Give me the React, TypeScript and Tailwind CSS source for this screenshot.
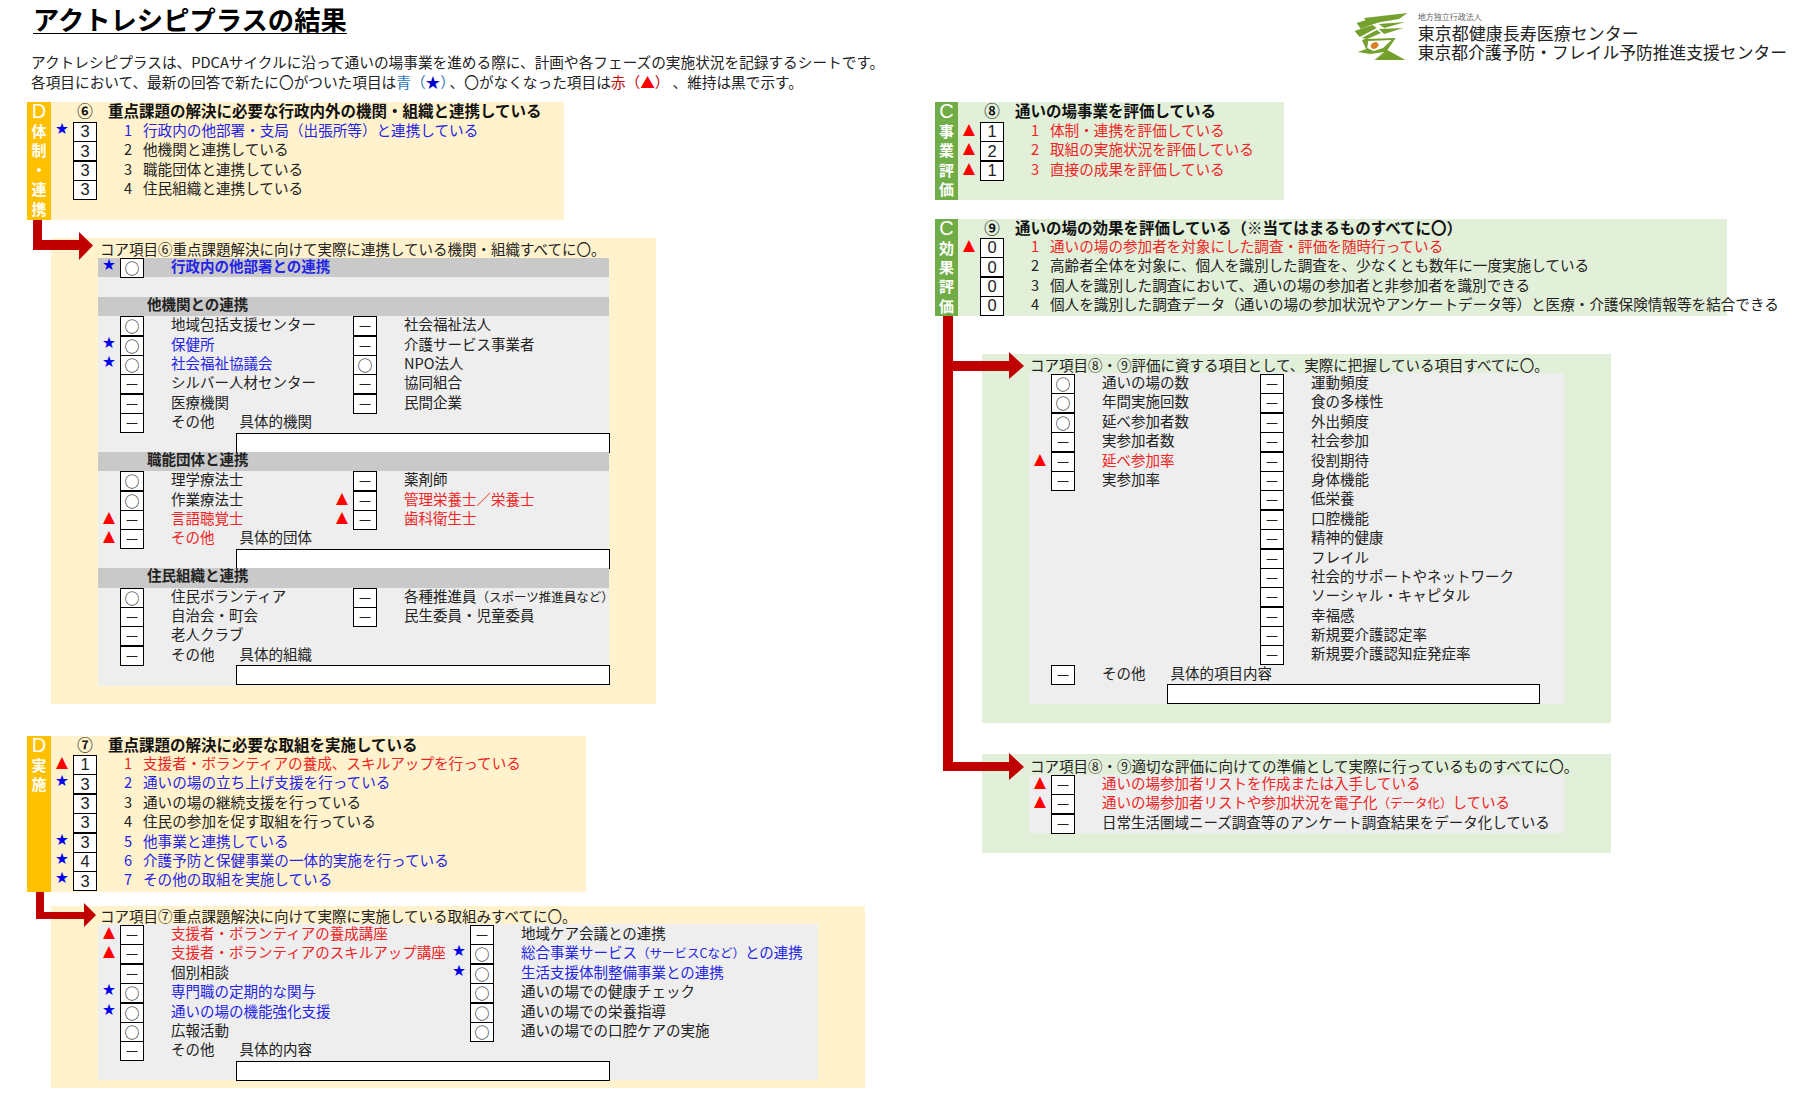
import React from "react";

const jp = "font-['Noto_Sans_CJK_JP',sans-serif]";

type Tone = "blue" | "red" | "black";

const toneClass: Record<Tone, string> = {
  blue: "text-[#2424e8]",
  red: "text-[#f02424]",
  black: "text-[#222222]",
};

function Mark({ tone }: { tone: Tone }) {
  return (
    <span className="flex w-[22px] shrink-0 justify-center font-['DejaVu_Sans',sans-serif] text-[15.5px] leading-[15px]">
      {tone === "blue" && <span className="text-[#0000ee]">★</span>}
      {tone === "red" && <span className="text-[#ff0000]">▲</span>}
    </span>
  );
}

function Box({ value }: { value: string }) {
  const digit = /[0-9]/.test(value);
  return (
    <span
      className={`flex h-[20px] w-[24px] shrink-0 items-center justify-center border border-black bg-white pb-[1px] leading-none text-[#222222] ${digit ? "font-['Liberation_Sans',sans-serif] text-[16.5px]" : "text-[15px]"}`}
    >
      {value}
    </span>
  );
}

// 設問の1行（★▲ + 回答欄 + 番号 + 文）
function Question({ no, text, value, tone = "black" }: { no: number; text: string; value: string; tone?: Tone }) {
  return (
    <div className="flex h-[19.4px] items-start whitespace-nowrap">
      <Mark tone={tone} />
      <Box value={value} />
      <span className={`ml-[27px] w-[19px] shrink-0 text-[14.6px] leading-[15px] ${toneClass[tone]}`}>{no}</span>
      <span className={`text-[14.6px] leading-[15px] ${toneClass[tone]}`}>{text}</span>
    </div>
  );
}

function Item({ label, value, tone = "black", note }: { label: React.ReactNode; value: string; tone?: Tone; note?: string }) {
  return (
    <div className="flex h-[19.4px] items-start whitespace-nowrap">
      <Mark tone={tone} />
      <Box value={value} />
      <span className={`ml-[27px] text-[14.5px] leading-[15px] ${toneClass[tone]}`}>{label}</span>
      {note && <span className="ml-[25px] text-[14.5px] leading-[15px] text-[#222222]">{note}</span>}
    </div>
  );
}

type Entry = { label: React.ReactNode; value: string; tone?: Tone; note?: string };

function Items({ entries, className }: { entries: Entry[]; className?: string }) {
  return (
    <div className={className}>
      {entries.map((e, i) => (
        <Item key={i} {...e} />
      ))}
    </div>
  );
}

function InputRow() {
  return (
    <div className="h-[19.4px] pl-[138px]">
      <div className="h-[20px] w-[374px] border border-black bg-white" />
    </div>
  );
}

function GroupBar({ children }: { children: React.ReactNode }) {
  return <div className="h-[19.4px] bg-[#c9c9c9] pl-[49px] text-[14.5px] font-bold leading-[14px] text-[#222222]">{children}</div>;
}

function SideBar({ letter, chars, className }: { letter: string; chars: string[]; className: string }) {
  return (
    <div className={`flex shrink-0 flex-col items-center text-white ${className}`}>
      <span className="h-[20px] font-['Liberation_Sans',sans-serif] text-[20px] leading-[18px]">{letter}</span>
      {chars.map((c, i) => (
        <span key={i} className="h-[19.4px] text-[15px] font-bold leading-[17px]">
          {c}
        </span>
      ))}
    </div>
  );
}

function PanelHead({ mark, text, short }: { mark: string; text: string; short?: boolean }) {
  return (
    <div className={`flex items-start whitespace-nowrap text-[15.5px] font-bold leading-[16px] text-[#111111] ${short ? "h-[19px]" : "h-[20px]"}`}>
      <span className="ml-[22px] w-[24px] shrink-0 text-center">{mark}</span>
      <span className="ml-[11px]">{text}</span>
    </div>
  );
}

function Logo() {
  return (
    <svg viewBox="0 0 70 58" className="h-[58px] w-[70px] shrink-0">
      <g transform="translate(-4 0) scale(1.06 1)">
        <g fill="#74a02e">
          <path d="M17 10 L58 5 L50 11 L33 14 L22 17 Z" />
          <path d="M10 15 L22 11 L28 15 L14 21 Z" />
          <path d="M8 23 L25 17 L29 20 L13 29 Z" />
          <path d="M15 30 L29 22 L33 25 L20 31 Z" />
          <path d="M31 16 L56 14 L36 20 Z" />
          <path d="M31 21 L54 20 L36 26 Z" />
          <path d="M15 32 L18 31 L47 30 L39 42 L56 52 L27 52 L36 44 L23 46 L11 44 L19 41 Z" />
        </g>
        <path d="M20 40 L21 33 L43 32 L35 40 L26 43 Z" fill="#ffffff" />
        <ellipse cx="27" cy="37.5" rx="3.8" ry="3" fill="#d8812a" transform="rotate(-35 27 37.5)" />
      </g>
    </svg>
  );
}

const core6a: Entry[] = [
  { label: "地域包括支援センター", value: "○" },
  { label: "保健所", value: "○", tone: "blue" },
  { label: "社会福祉協議会", value: "○", tone: "blue" },
  { label: "シルバー人材センター", value: "－" },
  { label: "医療機関", value: "－" },
  { label: "その他", value: "－", note: "具体的機関" },
];
const core6b: Entry[] = [
  { label: "社会福祉法人", value: "－" },
  { label: "介護サービス事業者", value: "－" },
  { label: "NPO法人", value: "○" },
  { label: "協同組合", value: "－" },
  { label: "民間企業", value: "－" },
];
const core6c: Entry[] = [
  { label: "理学療法士", value: "○" },
  { label: "作業療法士", value: "○" },
  { label: "言語聴覚士", value: "－", tone: "red" },
  { label: "その他", value: "－", tone: "red", note: "具体的団体" },
];
const core6d: Entry[] = [
  { label: "薬剤師", value: "－" },
  { label: "管理栄養士／栄養士", value: "－", tone: "red" },
  { label: "歯科衛生士", value: "－", tone: "red" },
];
const core6e: Entry[] = [
  { label: "住民ボランティア", value: "○" },
  { label: "自治会・町会", value: "－" },
  { label: "老人クラブ", value: "－" },
  { label: "その他", value: "－", note: "具体的組織" },
];
const core6f: Entry[] = [
  {
    label: (
      <>
        各種推進員<span className="text-[12.5px]">（スポーツ推進員など）</span>
      </>
    ),
    value: "－",
  },
  { label: "民生委員・児童委員", value: "－" },
];

const core7a: Entry[] = [
  { label: "支援者・ボランティアの養成講座", value: "－", tone: "red" },
  { label: "支援者・ボランティアのスキルアップ講座", value: "－", tone: "red" },
  { label: "個別相談", value: "－" },
  { label: "専門職の定期的な関与", value: "○", tone: "blue" },
  { label: "通いの場の機能強化支援", value: "○", tone: "blue" },
  { label: "広報活動", value: "○" },
  { label: "その他", value: "－", note: "具体的内容" },
];
const core7b: Entry[] = [
  { label: "地域ケア会議との連携", value: "－" },
  {
    label: (
      <>
        総合事業サービス<span className="text-[12.5px]">（サービスCなど）</span>との連携
      </>
    ),
    value: "○",
    tone: "blue",
  },
  { label: "生活支援体制整備事業との連携", value: "○", tone: "blue" },
  { label: "通いの場での健康チェック", value: "○" },
  { label: "通いの場での栄養指導", value: "○" },
  { label: "通いの場での口腔ケアの実施", value: "○" },
];

const core8a: Entry[] = [
  { label: "通いの場の数", value: "○" },
  { label: "年間実施回数", value: "○" },
  { label: "延べ参加者数", value: "○" },
  { label: "実参加者数", value: "－" },
  { label: "延べ参加率", value: "－", tone: "red" },
  { label: "実参加率", value: "－" },
];
const core8b: Entry[] = [
  "運動頻度",
  "食の多様性",
  "外出頻度",
  "社会参加",
  "役割期待",
  "身体機能",
  "低栄養",
  "口腔機能",
  "精神的健康",
  "フレイル",
  "社会的サポートやネットワーク",
  "ソーシャル・キャピタル",
  "幸福感",
  "新規要介護認定率",
  "新規要介護認知症発症率",
].map((label) => ({ label, value: "－" }));

export default function App() {
  return (
    <div className={`relative h-[1098px] w-[1800px] overflow-hidden bg-white text-[#222222] ${jp}`}>
      {/* ヘッダー */}
      <header className="flex h-[102px] justify-between">
        <div className="pl-[31px] pt-[4px]">
          <h1 className="ml-[2px] w-fit border-b border-black text-[26.3px] font-bold leading-[29px] text-black">アクトレシピプラスの結果</h1>
          <p className="mt-[18px] text-[14.66px] leading-[20px]">
            アクトレシピプラスは、PDCAサイクルに沿って通いの場事業を進める際に、計画や各フェーズの実施状況を記録するシートです。
            <br />
            各項目において、最新の回答で新たに〇がついた項目は<span className="text-[#2e75b6]">青（<span className="text-[#0000cc]">★</span>）</span>
            <span className="ml-[2px]">、〇がなくなった項目は</span>
            <span className="text-[#c00000]">赤（<span className="text-[#ff0000]">▲</span>）</span>
            <span className="inline-block w-[3px]" />、維持は黒で示す。
          </p>
        </div>
        <div className="flex items-start pr-[13px] pt-[8px]">
          <Logo />
          <div className="ml-[-2px] whitespace-nowrap text-[#222222]">
            <div className="pt-[3px] text-[8px] leading-[12px] text-[#666666]">地方独立行政法人</div>
            <div className="text-[17px] leading-[19px]">東京都健康長寿医療センター</div>
            <div className="text-[16.8px] leading-[20px]">東京都介護予防・フレイル予防推進支援センター</div>
          </div>
        </div>
      </header>

      <main className="flex">
        {/* 左カラム */}
        <section className="w-[935px] shrink-0 pl-[27px]">
          <div className="flex h-[118px] w-[537px] bg-[#fff2cc]">
            <SideBar letter="D" chars={["体", "制", "・", "連", "携"]} className="w-[24px] bg-[#ffc000]" />
            <div className="min-w-0 flex-1">
              <PanelHead mark="⑥" text="重点課題の解決に必要な行政内外の機関・組織と連携している" />
              <Question no={1} value="3" tone="blue" text="行政内の他部署・支局（出張所等）と連携している" />
              <Question no={2} value="3" text="他機関と連携している" />
              <Question no={3} value="3" text="職能団体と連携している" />
              <Question no={4} value="3" text="住民組織と連携している" />
            </div>
          </div>

          <div className="ml-[24px] mt-[18px] h-[466px] w-[605px] bg-[#fff2cc]">
            <div className="h-[20px] whitespace-nowrap pl-[49px] text-[14.5px] leading-[22px] text-[#222222]">コア項目⑥重点課題解決に向けて実際に連携している機関・組織すべてに〇。</div>
            <div className="ml-[47px] w-[511px] bg-[#eeeeee] pb-[1px]">
              <div className="flex h-[19.4px] items-start bg-[#c9c9c9]">
                <Mark tone="blue" />
                <Box value="○" />
                <span className="ml-[27px] text-[14.5px] font-bold leading-[15px] text-[#2424e8]">行政内の他部署との連携</span>
              </div>
              <div className="h-[19.4px]" />
              <GroupBar>他機関との連携</GroupBar>
              <div className="flex">
                <Items entries={core6a} className="w-[233px] shrink-0" />
                <Items entries={core6b} />
              </div>
              <InputRow />
              <GroupBar>職能団体と連携</GroupBar>
              <div className="flex">
                <Items entries={core6c} className="w-[233px] shrink-0" />
                <Items entries={core6d} />
              </div>
              <InputRow />
              <GroupBar>住民組織と連携</GroupBar>
              <div className="flex">
                <Items entries={core6e} className="w-[233px] shrink-0" />
                <Items entries={core6f} />
              </div>
              <InputRow />
            </div>
          </div>

          <div className="mt-[32px] flex h-[156px] w-[559px] bg-[#fff2cc]">
            <SideBar letter="D" chars={["実", "施"]} className="w-[24px] bg-[#ffc000]" />
            <div className="min-w-0 flex-1">
              <PanelHead short mark="⑦" text="重点課題の解決に必要な取組を実施している" />
              <Question no={1} value="1" tone="red" text="支援者・ボランティアの養成、スキルアップを行っている" />
              <Question no={2} value="3" tone="blue" text="通いの場の立ち上げ支援を行っている" />
              <Question no={3} value="3" text="通いの場の継続支援を行っている" />
              <Question no={4} value="3" text="住民の参加を促す取組を行っている" />
              <Question no={5} value="3" tone="blue" text="他事業と連携している" />
              <Question no={6} value="4" tone="blue" text="介護予防と保健事業の一体的実施を行っている" />
              <Question no={7} value="3" tone="blue" text="その他の取組を実施している" />
            </div>
          </div>

          <div className="ml-[24px] mt-[14px] h-[182px] w-[814px] bg-[#fff2cc]">
            <div className="h-[18px] whitespace-nowrap pl-[49px] text-[14.5px] leading-[20px] text-[#222222]">コア項目⑦重点課題解決に向けて実際に実施している取組みすべてに〇。</div>
            <div className="ml-[47px] w-[720px] bg-[#eeeeee] pt-[1px]">
              <div className="flex">
                <Items entries={core7a} className="w-[350px] shrink-0" />
                <Items entries={core7b} />
              </div>
              <InputRow />
            </div>
          </div>
        </section>

        {/* 右カラム */}
        <section className="flex-1">
          <div className="flex h-[98px] w-[349px] bg-[#e2efd9]">
            <SideBar letter="C" chars={["事", "業", "評", "価"]} className="w-[23px] bg-[#70ad47]" />
            <div className="min-w-0 flex-1">
              <PanelHead mark="⑧" text="通いの場事業を評価している" />
              <Question no={1} value="1" tone="red" text="体制・連携を評価している" />
              <Question no={2} value="2" tone="red" text="取組の実施状況を評価している" />
              <Question no={3} value="1" tone="red" text="直接の成果を評価している" />
            </div>
          </div>

          <div className="mt-[19px] flex h-[97px] w-[792px] bg-[#e2efd9]">
            <SideBar letter="C" chars={["効", "果", "評", "価"]} className="w-[23px] bg-[#70ad47]" />
            <div className="min-w-0 flex-1">
              <PanelHead short mark="⑨" text="通いの場の効果を評価している（※当てはまるものすべてに〇）" />
              <Question no={1} value="0" tone="red" text="通いの場の参加者を対象にした調査・評価を随時行っている" />
              <Question no={2} value="0" text="高齢者全体を対象に、個人を識別した調査を、少なくとも数年に一度実施している" />
              <Question no={3} value="0" text="個人を識別した調査において、通いの場の参加者と非参加者を識別できる" />
              <Question no={4} value="0" text="個人を識別した調査データ（通いの場の参加状況やアンケートデータ等）と医療・介護保険情報等を結合できる" />
            </div>
          </div>

          <div className="ml-[47px] mt-[38px] h-[369px] w-[629px] bg-[#e2efd9]">
            <div className="h-[19px] whitespace-nowrap pl-[48px] text-[14.5px] leading-[22px] text-[#222222]">コア項目⑧・⑨評価に資する項目として、実際に把握している項目すべてに〇。</div>
            <div className="ml-[47px] w-[535px] bg-[#eeeeee] pt-[1px]">
              <div className="flex">
                <Items entries={core8a} className="w-[209px] shrink-0" />
                <Items entries={core8b} />
              </div>
              <Item label="その他" value="－" note="具体的項目内容" />
              <div className="h-[20px] pl-[138px]">
                <div className="h-[20px] w-[373px] border border-black bg-white" />
              </div>
            </div>
          </div>

          <div className="ml-[47px] mt-[31px] h-[99px] w-[629px] bg-[#e2efd9]">
            <div className="h-[21px] whitespace-nowrap pl-[48px] text-[14.5px] leading-[24px] text-[#222222]">コア項目⑧・⑨適切な評価に向けての準備として実際に行っているものすべてに〇。</div>
            <div className="ml-[47px] h-[58px] w-[535px] bg-[#eeeeee]">
              <Item label="通いの場参加者リストを作成または入手している" value="－" tone="red" />
              <Item
                label={
                  <>
                    通いの場参加者リストや参加状況を電子化<span className="text-[12.5px]">（データ化）</span>している
                  </>
                }
                value="－"
                tone="red"
              />
              <Item label="日常生活圏域ニーズ調査等のアンケート調査結果をデータ化している" value="－" />
            </div>
          </div>
        </section>
      </main>

      {/* 矢印 */}
      <svg className="pointer-events-none absolute left-0 top-0 h-[1098px] w-[1800px]" viewBox="0 0 1800 1098" fill="#c00000">
        <path d="M33 220 H42 V240 H79 V232 L93 245.5 L79 260 V250 H33 Z" />
        <path d="M36 892 H44 V912 H84 V903 L96 915 L84 927 V919 H36 Z" />
        <path d="M943 316 H953 V361 H1009 V352 L1024 366 L1009 379 V371 H953 V762 H1009 V753 L1024 767 L1009 780 V771 H943 Z" />
      </svg>
    </div>
  );
}
